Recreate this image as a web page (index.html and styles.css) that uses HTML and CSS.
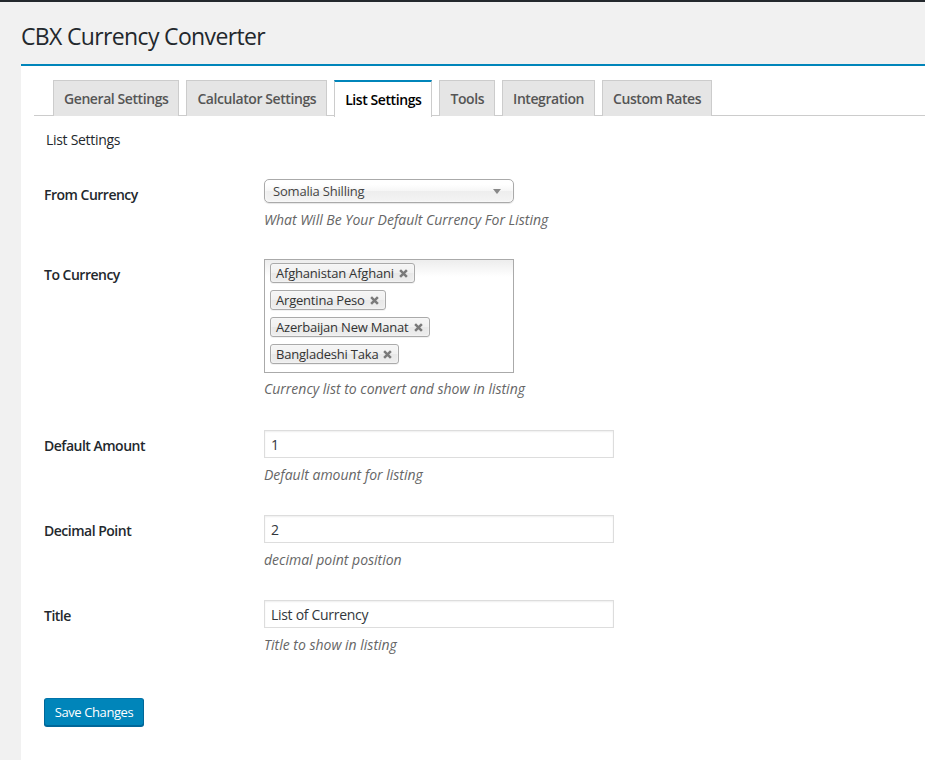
FILE: index.html
```html
<!DOCTYPE html>
<html>
<head>
<meta charset="utf-8">
<link rel="stylesheet" href="styles.css">
</head>
<body>
<div class="adminbar"></div>
<div class="wrap">
  <h1 class="page-title">CBX Currency Converter</h1>
  <div class="panel">
    <nav class="tabs">
      <a class="tab">General Settings</a>
      <a class="tab">Calculator Settings</a>
      <a class="tab active">List Settings</a>
      <a class="tab">Tools</a>
      <a class="tab">Integration</a>
      <a class="tab">Custom Rates</a>
    </nav>
    <div class="content">
      <h2 class="section-title">List Settings</h2>
      <div class="form">
        <div class="row first">
          <div class="label">From Currency</div>
          <div class="field">
            <div class="select">
              <span>Somalia Shilling</span>
              <span class="arrow"></span>
            </div>
            <p class="desc">What Will Be Your Default Currency For Listing</p>
          </div>
        </div>
        <div class="row second">
          <div class="label">To Currency</div>
          <div class="field">
            <div class="multi">
              <span class="chip">Afghanistan Afghani <svg class="x" viewBox="0 0 8 8"><path d="M1 1L7 7M7 1L1 7"/></svg></span>
              <span class="chip">Argentina Peso <svg class="x" viewBox="0 0 8 8"><path d="M1 1L7 7M7 1L1 7"/></svg></span>
              <span class="chip">Azerbaijan New Manat <svg class="x" viewBox="0 0 8 8"><path d="M1 1L7 7M7 1L1 7"/></svg></span>
              <span class="chip">Bangladeshi Taka <svg class="x" viewBox="0 0 8 8"><path d="M1 1L7 7M7 1L1 7"/></svg></span>
            </div>
            <p class="desc">Currency list to convert and show in listing</p>
          </div>
        </div>
        <div class="row">
          <div class="label">Default Amount</div>
          <div class="field">
            <input class="text" type="text" value="1">
            <p class="desc">Default amount for listing</p>
          </div>
        </div>
        <div class="row">
          <div class="label">Decimal Point</div>
          <div class="field">
            <input class="text" type="text" value="2">
            <p class="desc">decimal point position</p>
          </div>
        </div>
        <div class="row">
          <div class="label">Title</div>
          <div class="field">
            <input class="text" type="text" value="List of Currency">
            <p class="desc">Title to show in listing</p>
          </div>
        </div>
      </div>
      <div class="submit">
        <button class="button-primary">Save Changes</button>
      </div>
    </div>
  </div>
</div>
</body>
</html>
```

FILE: styles.css
```css
* { box-sizing: border-box; }
html, body { margin: 0; padding: 0; }
body {
  background: #f1f1f1;
  font-family: "Open Sans", "Noto Sans", sans-serif;
  font-size: 14px;
  color: #23282d;
  height: 760px;
  overflow: hidden;
}
.adminbar { height: 2px; background: #23282d; }
.wrap { padding-left: 21px; }
.page-title {
  margin: 0;
  padding-top: 20px;
  height: 62px;
  font-size: 23px;
  font-weight: 400;
  line-height: 29px;
  letter-spacing: -0.65px;
  color: #23282d;
}
.panel {
  background: #fff;
  border-top: 2px solid #0085ba;
  min-height: 800px;
  padding-top: 14px;
}
.tabs {
  display: flex;
  gap: 7px;
  margin-left: 13px;
  padding-left: 19px;
  border-bottom: 1px solid #ccc;
  height: 36px;
}
.tab {
  display: block;
  height: 36px;
  padding: 0 10px;
  line-height: 35px;
  background: #e5e5e5;
  border: 1px solid #ccc;
  border-bottom: none;
  color: #555;
  font-weight: 600;
  font-size: 14px;
  letter-spacing: -0.42px;
  white-space: nowrap;
}
.tab.active {
  background: #fff;
  color: #000;
  border-top: 2px solid #0085ba;
  height: 37px;
  line-height: 35px;
}
.content { padding-left: 23px; }
.section-title {
  margin: 13px 0 0 2px;
  font-size: 14px;
  font-weight: 400;
  line-height: 21px;
  letter-spacing: -0.3px;
  color: #23282d;
}
.form { margin-top: 14px; }
.row {
  display: grid;
  grid-template-columns: 220px 1fr;
  padding: 15px 0;
}
.row.first { padding-bottom: 14px; }
.row.second { padding-bottom: 16px; }
.label {
  padding-top: 5px;
  font-weight: 600;
  line-height: 21px;
  letter-spacing: -0.5px;
  color: #23282d;
}
.field { display: flex; flex-direction: column; align-items: flex-start; }
.desc {
  margin: 6px 0 0;
  font-style: italic;
  color: #666;
  line-height: 21px;
}
.select {
  width: 250px;
  height: 24px;
  border: 1px solid #aaa;
  border-radius: 5px;
  background: linear-gradient(#fff 20%, #f6f6f6 50%, #eee 52%, #f4f4f4 100%);
  box-shadow: 0 0 3px #fff inset, 0 1px 1px rgba(0,0,0,.1);
  display: flex;
  align-items: center;
  justify-content: space-between;
  padding: 0 12px 0 8px;
  font-size: 13px;
  letter-spacing: -0.2px;
  color: #444;
}
.select + .desc { margin-top: 6px; }
.arrow {
  width: 0; height: 0;
  border-left: 4px solid transparent;
  border-right: 4px solid transparent;
  border-top: 5px solid #888;
}
.multi {
  width: 250px;
  height: 114px;
  border: 1px solid #aaa;
  background: linear-gradient(#eee 1%, #fff 15%);
  padding: 3px 5px;
  display: flex;
  flex-direction: column;
  align-items: flex-start;
  gap: 7px;
}
.multi + .desc { margin-top: 5px; }
.chip {
  display: inline-flex;
  align-items: center;
  height: 20px;
  padding: 0 6px 0 5px;
  border: 1px solid #aaa;
  border-radius: 3px;
  background: linear-gradient(#f4f4f4 20%, #f0f0f0 50%, #e8e8e8 52%, #eee 100%);
  box-shadow: 0 0 2px #fff inset, 0 1px 0 rgba(0,0,0,.05);
  color: #333;
  font-size: 13px;
  line-height: 13px;
  letter-spacing: -0.2px;
  white-space: nowrap;
}
.x {
  width: 9px;
  height: 9px;
  margin-left: 5px;
  stroke: #7a7a7a;
  stroke-width: 2.2;
  fill: none;
}
.text {
  width: 350px;
  height: 28px;
  margin: 0;
  border: 1px solid #ddd;
  box-shadow: inset 0 1px 2px rgba(0,0,0,.07);
  padding: 0 6px;
  font-family: inherit;
  font-size: 14px;
  letter-spacing: -0.3px;
  color: #32373c;
  background: #fff;
  outline: none;
}
.submit { margin-top: 28px; }
.button-primary {
  width: 100px;
  height: 28px;
  background: #0085ba;
  border: 1px solid #0073aa;
  border-color: #0073aa #006799 #006799;
  border-radius: 3px;
  box-shadow: 0 1px 0 #006799;
  color: #fff;
  font-family: inherit;
  font-size: 13px;
  letter-spacing: -0.4px;
  padding: 0;
  cursor: pointer;
}
```
